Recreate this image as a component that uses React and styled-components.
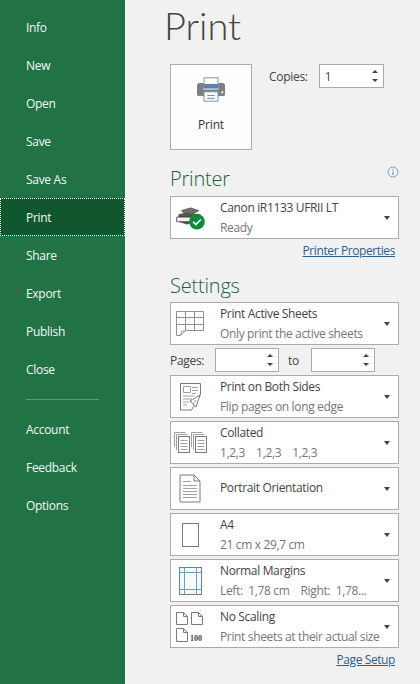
import React from 'react';
import styled, { createGlobalStyle } from 'styled-components';

const GlobalStyle = createGlobalStyle`
  html, body {
    margin: 0;
    padding: 0;
    background: #f1f1f1;
  }
  body {
    font-family: "Open Sans", "Liberation Sans", sans-serif;
  }
`;

const Page = styled.div`
  display: flex;
  width: 420px;
  height: 684px;
  overflow: hidden;
`;

const Sidebar = styled.nav`
  width: 125px;
  flex: none;
  padding-top: 8px;
  background: #217346;
  box-sizing: border-box;
`;

const NavItem = styled.div`
  height: 38px;
  display: flex;
  align-items: center;
  padding-left: 26px;
  box-sizing: border-box;
  font-size: 12px;
  letter-spacing: -0.3px;
  color: #f2f8f4;
  background: ${(p) => (p.$active ? '#10572f' : 'transparent')};
  outline: ${(p) => (p.$active ? '1px dotted #ffffff' : 'none')};
  outline-offset: -1px;
`;

const NavRule = styled.div`
  height: 1px;
  margin: 11px 26px 10px;
  background: #5c9a78;
`;

const Main = styled.main`
  flex: 1;
  min-width: 0;
  padding-left: 45px;
  padding-right: 21px;
`;

const Title = styled.h1`
  margin: 0 0 0 -6px;
  height: 64px;
  font-family: Lato, "Open Sans", sans-serif;
  font-size: 38px;
  line-height: 50px;
  font-weight: 300;
  color: #444444;
`;

const TopRow = styled.div`
  display: flex;
  align-items: flex-start;
`;

const PrintButton = styled.div`
  width: 82px;
  height: 86px;
  box-sizing: border-box;
  border: 1px solid #ababab;
  background: #fdfdfd;
  display: flex;
  flex-direction: column;
  align-items: center;
  padding-top: 12px;
  font-size: 12px;
  letter-spacing: -0.2px;
  color: #333333;
  gap: 14px;
`;

const CopiesRow = styled.div`
  display: flex;
  align-items: center;
  margin-left: 17px;
  gap: 11px;
  font-size: 12px;
  letter-spacing: -0.3px;
  color: #444444;
`;

const SpinBox = styled.div`
  width: ${(p) => p.$width}px;
  height: 24px;
  box-sizing: border-box;
  border: 1px solid #ababab;
  background: #ffffff;
  display: flex;
  align-items: center;
  justify-content: space-between;
  padding: 0 5px 0 5px;
  font-size: 12px;
  color: #444444;
`;

const Arrows = styled.div`
  display: flex;
  flex-direction: column;
  gap: 6px;
`;

const ArrowUp = styled.span`
  width: 0;
  height: 0;
  border-left: 3px solid transparent;
  border-right: 3px solid transparent;
  border-bottom: 3px solid #444444;
`;

const ArrowDown = styled.span`
  width: 0;
  height: 0;
  border-left: 3px solid transparent;
  border-right: 3px solid transparent;
  border-top: 3px solid #444444;
`;

const HeadingRow = styled.div`
  display: flex;
  justify-content: space-between;
  align-items: flex-start;
  height: 32px;
  margin-top: ${(p) => p.$top}px;
`;

const Heading = styled.h2`
  margin: ${(p) => p.$nudge}px 0 0;
  font-size: 20px;
  line-height: 28px;
  font-weight: 300;
  letter-spacing: -0.2px;
  color: #1e6141;
`;

const InfoIcon = styled.svg`
  margin: 2px 0 0 0;
`;

const Dropdown = styled.div`
  height: 43px;
  box-sizing: border-box;
  border: 1px solid #ababab;
  background: #ffffff;
  display: flex;
  align-items: center;
  margin-bottom: 3px;
`;

const IconSlot = styled.div`
  width: 38px;
  margin-right: 11px;
  flex: none;
  display: flex;
  justify-content: center;
  align-items: center;
`;

const Labels = styled.div`
  flex: 1;
  min-width: 0;
  display: flex;
  flex-direction: column;
  gap: 3px;
  padding-bottom: ${(p) => (p.$single ? 2 : 0)}px;
  font-size: 12px;
  line-height: 17px;
  white-space: nowrap;
  letter-spacing: -0.35px;
`;

const Primary = styled.div`
  color: #444444;
`;

const Secondary = styled.div`
  color: #767676;
  white-space: pre;
`;

const Caret = styled.span`
  flex: none;
  width: 0;
  height: 0;
  margin: 0 8px 0 4px;
  border-left: 3.5px solid transparent;
  border-right: 3.5px solid transparent;
  border-top: 4px solid #444444;
`;

const PagesRow = styled.div`
  display: flex;
  align-items: center;
  height: 24px;
  margin-bottom: 3px;
  font-size: 12px;
  letter-spacing: -0.3px;
  color: #444444;
`;

const PagesLabel = styled.span`
  width: 45px;
`;

const ToLabel = styled.span`
  width: 32px;
  padding-left: 9px;
  box-sizing: border-box;
`;

const LinkRow = styled.div`
  display: flex;
  justify-content: flex-end;
  padding-right: 4px;
  margin-top: ${(p) => p.$top}px;
  font-size: 12px;
  letter-spacing: -0.4px;
  line-height: 17px;
`;

const Link = styled.a`
  color: #2f5f8f;
  text-decoration: underline;
`;

const navTop = ['Info', 'New', 'Open', 'Save', 'Save As', 'Print', 'Share', 'Export', 'Publish', 'Close'];
const navBottom = ['Account', 'Feedback', 'Options'];

const line = { stroke: '#7a7a7a', strokeWidth: 1, fill: 'none' };
const thin = { stroke: '#a0a0a0', strokeWidth: 1, fill: 'none' };

const BigPrinter = () => (
  <svg width="28" height="25" viewBox="0 0 30 26">
    <rect x="7.5" y="0.5" width="15" height="10" fill="#fff" stroke="#8a8a8a" />
    <path d="M3 6h4v7h16V6h4a3 3 0 0 1 3 3v9a2 2 0 0 1-2 2H2a2 2 0 0 1-2-2V9a3 3 0 0 1 3-3z" fill="#7f7f7f" />
    <rect x="7" y="7" width="16" height="5" fill="#5b84ab" />
    <rect x="26" y="15" width="2" height="2" fill="#fff" />
    <rect x="7.5" y="15.5" width="15" height="10" fill="#fff" stroke="#6f94b6" />
    <path d="M11 19.5h8M11 22.5h8" stroke="#5b84ab" />
  </svg>
);

const PrinterReady = () => (
  <svg width="31" height="24" viewBox="0 0 32 26">
    <path d="M6 5l10-3 9 3-5 3H9z" fill="#6f6f6f" stroke="#444" strokeWidth="0.6" />
    <path d="M3 9l9-2 11 2v8l-11 3-9-3z" fill="#555" />
    <path d="M1 12h17v5H1z" fill="#f3f3f3" stroke="#333" strokeWidth="0.8" />
    <circle cx="23" cy="17" r="8.5" fill="#0f8a3c" />
    <path d="M18.8 17.2l3 3 5.4-5.6" stroke="#fff" strokeWidth="1.8" fill="none" />
  </svg>
);

const SheetsIcon = () => (
  <svg width="28" height="26" viewBox="0 0 28 26">
    <path d="M0.5 0.5h27v19h-18l-5 5h-4z M0.5 6.5h27M0.5 13.5h27M9.5 0.5v19M18.5 0.5v19" fill="none" stroke="#929292" />
    <path d="M4.5 25l1-5h4" {...thin} />
  </svg>
);

const BothSidesIcon = () => (
  <svg width="22" height="29" viewBox="0 0 22 29">
    <path d="M1.5 1.5h20v11l-9 15.5h-11z" {...line} />
    <path d="M4.5 4.5h7v6h-7zM13 5.5h6M13 8.5h6M13 11.5h4M4 14h11M4 17h9M4 20h6M4 23h4" {...thin} />
    <path d="M21 13l-4 12-6-6z" fill="#fff" stroke="#7a7a7a" />
    <path d="M12 19l3-3M14 22l3-4" {...thin} />
  </svg>
);

const CollatedSheet = ({ x }) => (
  <g transform={`translate(${x} 0)`}>
    <path d="M0.5 15V0.5h11M2.5 18V2.5h11" {...thin} />
    <rect x="4.5" y="4.5" width="11" height="16" fill="#fff" stroke="#7a7a7a" />
    <path d="M6.5 8.5h7M6.5 11.5h7M6.5 14.5h7M6.5 17.5h7" {...thin} />
  </g>
);

const CollatedIcon = () => (
  <svg width="33" height="21" viewBox="0 0 33 21">
    <CollatedSheet x={0} />
    <CollatedSheet x={17} />
  </svg>
);

const PortraitIcon = () => (
  <svg width="22" height="29" viewBox="0 0 22 29">
    <path d="M1 1h14l6 6v21H1z M15 1v6h6" {...line} />
    <path d="M4 7.5h8M4 11.5h14M4 14.5h14M4 17.5h14M4 20.5h14M4 23.5h14" {...thin} />
  </svg>
);

const A4Icon = () => (
  <svg width="17" height="24" viewBox="0 0 17 24">
    <rect x="0.5" y="0.5" width="16" height="23" {...line} />
  </svg>
);

const MarginsIcon = () => (
  <svg width="23" height="28" viewBox="0 0 23 28">
    <rect x="0.5" y="0.5" width="22" height="27" fill="#f6fafc" stroke="#6b7f8a" />
    <path d="M5.5 0v28M17.5 0v28M0 5.5h23M0 22.5h23" stroke="#6fa1bd" fill="none" />
  </svg>
);

const ScalingIcon = () => (
  <svg width="28" height="30" viewBox="0 0 28 30">
    <path d="M0.5 0.5h7l4 4v8h-11zM7.5 0.5v4h4" {...line} />
    <path d="M15.5 0.5h7l4 4v8h-11zM22.5 0.5v4h4" {...line} />
    <path d="M0.5 16.5h7l4 4v9h-11zM7.5 16.5v4h4" {...line} />
    <text x="14" y="29" fontFamily="Liberation Serif, serif" fontWeight="700" fontSize="8" fill="#444">100</text>
  </svg>
);

const Spin = ({ width, children }) => (
  <SpinBox $width={width}>
    <span>{children}</span>
    <Arrows>
      <ArrowUp />
      <ArrowDown />
    </Arrows>
  </SpinBox>
);

const Option = ({ icon, title, sub }) => (
  <Dropdown>
    <IconSlot>{icon}</IconSlot>
    <Labels $single={!sub}>
      <Primary>{title}</Primary>
      {sub && <Secondary>{sub}</Secondary>}
    </Labels>
    <Caret />
  </Dropdown>
);

const App = () => (
  <Page>
    <GlobalStyle />
    <Sidebar>
      {navTop.map((item) => (
        <NavItem key={item} $active={item === 'Print'}>{item}</NavItem>
      ))}
      <NavRule />
      {navBottom.map((item) => (
        <NavItem key={item}>{item}</NavItem>
      ))}
    </Sidebar>
    <Main>
      <Title>Print</Title>
      <TopRow>
        <PrintButton>
          <BigPrinter />
          <span>Print</span>
        </PrintButton>
        <CopiesRow>
          <span>Copies:</span>
          <Spin width={65}>1</Spin>
        </CopiesRow>
      </TopRow>
      <HeadingRow $top={14}>
        <Heading $nudge={1}>Printer</Heading>
        <InfoIcon width="12" height="12" viewBox="0 0 12 12">
          <circle cx="6" cy="6" r="5" fill="none" stroke="#7aa0c4" />
          <path d="M6 5.5v3.5M6 3v1.2" stroke="#5f86ad" />
        </InfoIcon>
      </HeadingRow>
      <Option icon={<PrinterReady />} title="Canon iR1133 UFRII LT" sub="Ready" />
      <LinkRow $top={1}><Link>Printer Properties</Link></LinkRow>
      <HeadingRow $top={11}>
        <Heading $nudge={2}>Settings</Heading>
      </HeadingRow>
      <Option icon={<SheetsIcon />} title="Print Active Sheets" sub="Only print the active sheets" />
      <PagesRow>
        <PagesLabel>Pages:</PagesLabel>
        <Spin width={64} />
        <ToLabel>to</ToLabel>
        <Spin width={64} />
      </PagesRow>
      <Option icon={<BothSidesIcon />} title="Print on Both Sides" sub="Flip pages on long edge" />
      <Option icon={<CollatedIcon />} title="Collated" sub="1,2,3    1,2,3    1,2,3" />
      <Option icon={<PortraitIcon />} title="Portrait Orientation" />
      <Option icon={<A4Icon />} title="A4" sub="21 cm x 29,7 cm" />
      <Option icon={<MarginsIcon />} title="Normal Margins" sub="Left:  1,78 cm    Right:  1,78..." />
      <Option icon={<ScalingIcon />} title="No Scaling" sub="Print sheets at their actual size" />
      <LinkRow $top={0}><Link>Page Setup</Link></LinkRow>
    </Main>
  </Page>
);

export default App;
